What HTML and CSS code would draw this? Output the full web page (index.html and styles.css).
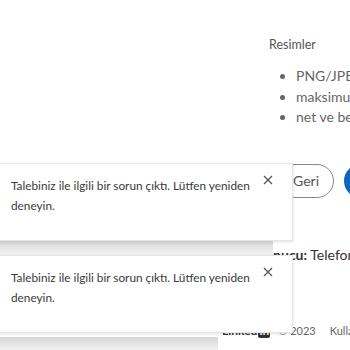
FILE: index.html
```html
<!DOCTYPE html>
<html lang="tr">
<head>
  <meta charset="UTF-8">
  <title>Fotoğraf yükle</title>
  <link rel="stylesheet" href="styles.css">
</head>
<body>

  <div class="sayfa">
    <div class="icerik">
      <h3 class="baslik">Resimler</h3>
      <ul class="kurallar">
        <li>PNG/JPEG formatı</li>
        <li>maksimum 8 MB</li>
        <li>net ve belirgin</li>
      </ul>
    </div>

    <div class="eylemler">
      <button class="btn-geri">Geri</button>
      <button class="btn-ileri"></button>
    </div>

    <p class="bilgi"><b>Doğrulama bulunucu:</b> Telefon</p>

    <div class="altbilgi">
      <span class="logo">Linked<span class="logo-in">in</span></span>
      <span class="yil">© 2023</span>
      <span class="link">Kullanıcı Sözleşmesi</span>
    </div>
  </div>

  <!-- Bildirimler -->
  <div class="bildirimler">
    <div class="bildirim">
      <p>Talebiniz ile ilgili bir sorun çıktı. Lütfen yeniden deneyin.</p>
      <button class="kapat">
        <svg width="10" height="10" viewBox="0 0 10 10"><path d="M1 1L9 9M9 1L1 9" stroke="#555" stroke-width="1.3" fill="none"/></svg>
      </button>
    </div>
    <div class="golge golge-ara"></div>
    <div class="bildirim">
      <p>Talebiniz ile ilgili bir sorun çıktı. Lütfen yeniden deneyin.</p>
      <button class="kapat">
        <svg width="10" height="10" viewBox="0 0 10 10"><path d="M1 1L9 9M9 1L1 9" stroke="#555" stroke-width="1.3" fill="none"/></svg>
      </button>
    </div>
    <div class="golge golge-alt"></div>
  </div>

</body>
</html>
```

FILE: styles.css
```css
html, body {
  margin: 0;
  background: #fff;
  overflow: hidden;
  font-family: Lato, "Open Sans", sans-serif;
}

.sayfa {
  width: 420px;
  height: 350px;
  display: flex;
  flex-direction: column;
}

.icerik {
  padding-left: 269px;
  padding-top: 37px;
}

.baslik {
  margin: 0;
  font-size: 12.5px;
  font-weight: 400;
  color: #555;
}

.kurallar {
  margin: 14px 0 0;
  padding-left: 27px;
  color: #666;
  font-size: 14px;
  line-height: 20.5px;
}

.eylemler {
  display: flex;
  align-items: center;
  gap: 10px;
  padding-left: 278px;
  margin-top: 36px;
}

.btn-geri {
  height: 34px;
  padding: 0 14px;
  border: 1px solid #888;
  border-radius: 17px;
  background: #fff;
  color: #555;
  font-family: inherit;
  font-size: 14px;
}

.btn-ileri {
  width: 34px;
  height: 34px;
  border: none;
  border-radius: 17px;
  background: #0a66c2;
}

.bilgi {
  margin: 48px 0 0;
  padding-left: 174px;
  font-size: 14px;
  color: #333;
  white-space: nowrap;
}

.bilgi b {
  font-weight: 700;
}

.altbilgi {
  display: flex;
  align-items: baseline;
  gap: 6px;
  margin-top: 60px;
  padding-left: 222px;
  font-size: 11px;
  color: #666;
  white-space: nowrap;
}

.logo {
  font-weight: 700;
  color: #333;
  font-size: 12px;
}

.logo-in {
  background: #333;
  color: #fff;
  padding: 0 1px;
  margin-left: 1px;
  border-radius: 2px;
}

.yil {
  margin-left: 2px;
}

.link {
  margin-left: 8px;
}

/* bildirimler sayfanın üstünde */
.bildirimler {
  position: absolute;
  left: -8px;
  top: 163px;
  display: flex;
  flex-direction: column;
}

.bildirim {
  width: 301px;
  height: 78px;
  box-sizing: border-box;
  display: flex;
  align-items: flex-start;
  padding: 12px 12px 0 18px;
  background: #fff;
  border: 1px solid #e6e6e6;
  box-shadow: 0 1px 3px rgba(0, 0, 0, 0.12);
}

.bildirim p {
  margin: 0;
  flex: 1;
  font-size: 11.8px;
  line-height: 20px;
  color: #3a3a3a;
}

.kapat {
  border: none;
  background: none;
  padding: 0;
  margin: -1px 7px 0 6px;
  display: flex;
}

.golge {
  background: linear-gradient(#c9c9c9, #e4e4e4 40%, #f1f1f1);
}

.golge-ara {
  width: 281px;
  height: 14px;
}

.golge-alt {
  width: 226px;
  height: 14px;
  margin-top: 4px;
  background: linear-gradient(#d6d6d6, #f4f4f4);
}
```
